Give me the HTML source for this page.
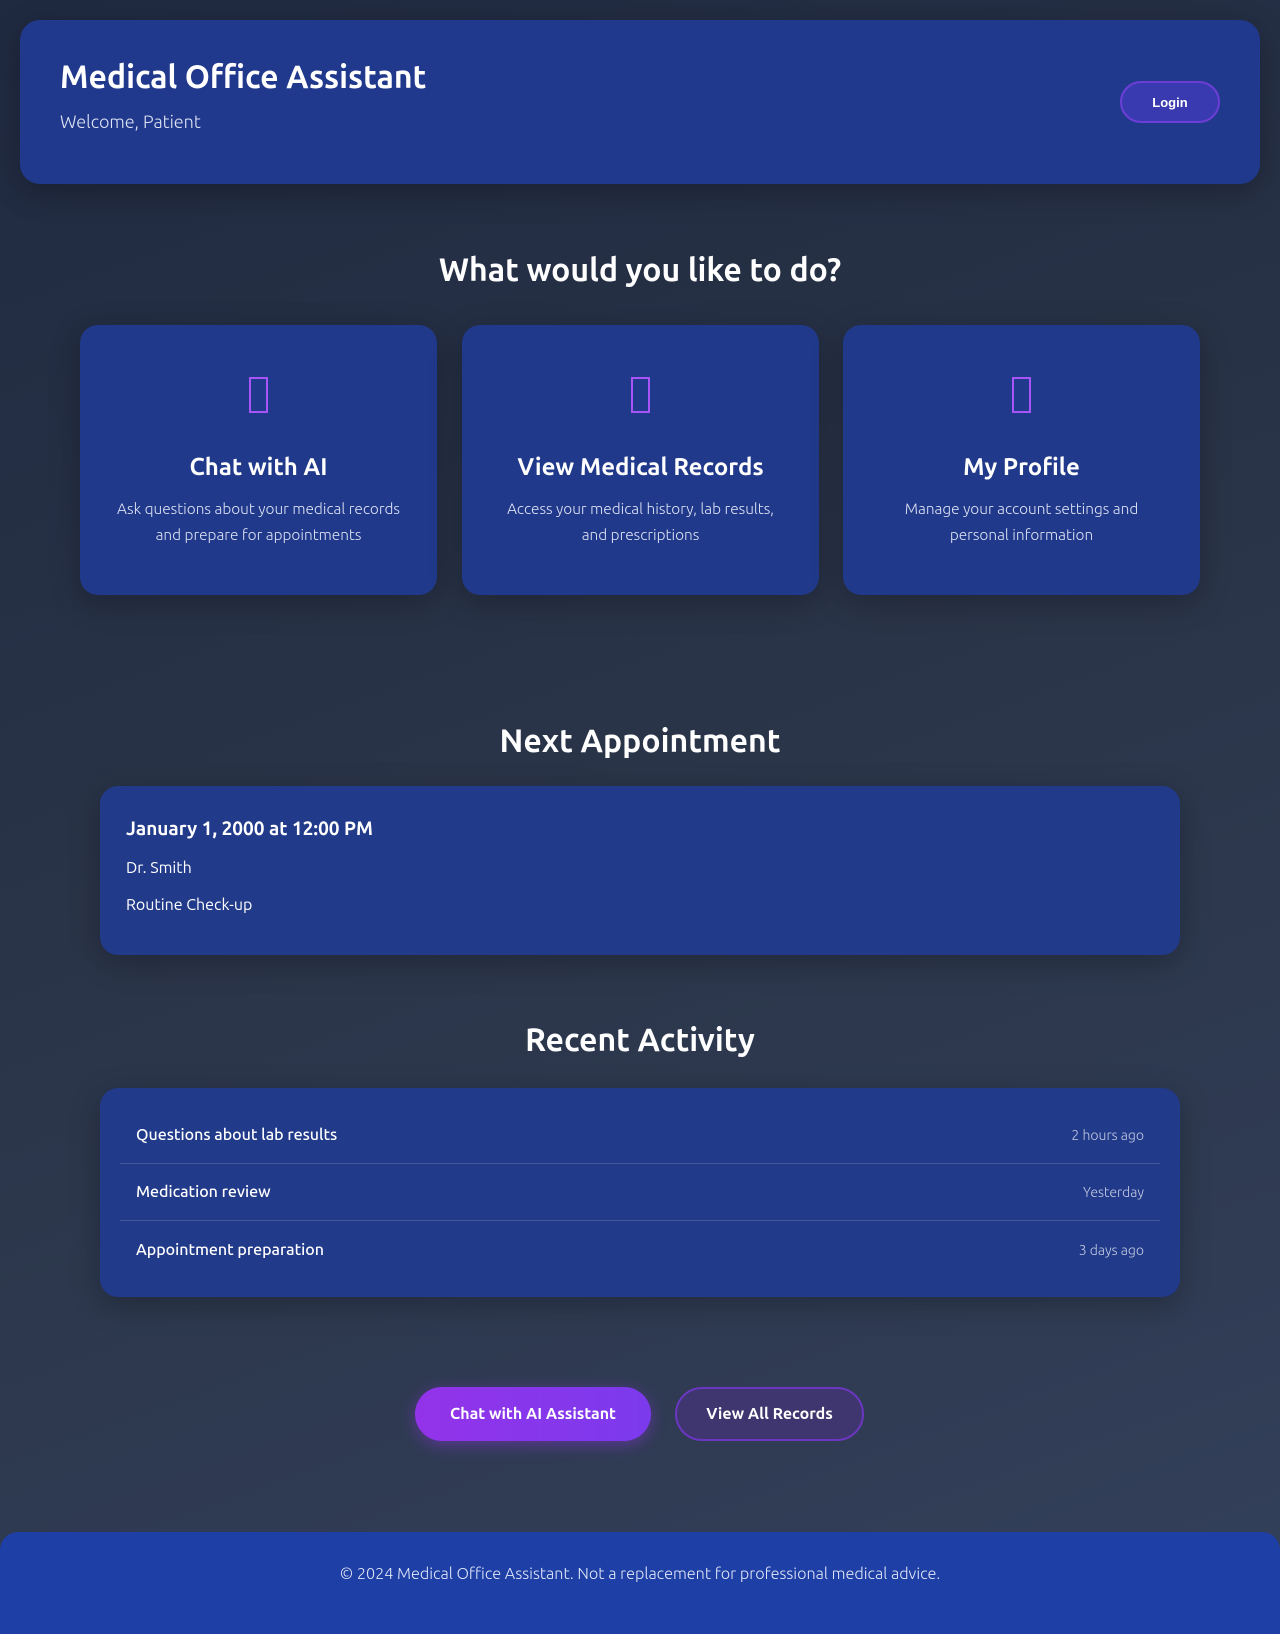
<!DOCTYPE html>
<html><head><meta charset="utf-8"><style>
*{box-sizing:border-box;margin:0;padding:0}
body{width:1280px;height:1634px;overflow:hidden;font-family:"Ubuntu","Liberation Sans",sans-serif;color:#fff;background:linear-gradient(160deg,#1f2940 0%,#2a3448 45%,#33405a 100%);position:relative}
.a{position:absolute}
.hdr{left:20px;top:20px;width:1240px;height:164px;border-radius:20px;background:#20398c;box-shadow:0 8px 30px rgba(0,0,0,.25)}
h1{font-size:32px;font-weight:600;position:absolute;left:40px;top:39px}
.wel{position:absolute;left:40px;top:92px;font-size:18px;color:#dfe4f5;font-weight:300}
.login{left:1120px;top:81px;width:100px;height:42px;border-radius:21px;background:#3a3ab0;border:2px solid #6d3ed6;font:bold 13px "Liberation Sans",sans-serif;display:flex;align-items:center;justify-content:center}
.h2{width:1280px;left:0;text-align:center;font-size:32px;font-weight:600}
.card{top:325px;width:357px;height:270px;border-radius:18px;background:#21398a;box-shadow:0 8px 30px rgba(0,0,0,.25);text-align:center}
.ico{width:19px;height:36px;border:2px solid #a855f7;margin:52px auto 0}
.card h3{font-size:24px;font-weight:600;margin-top:40px}
.card p{font-size:15.4px;line-height:26px;color:#dde3f5;margin-top:16px;padding:0 34px;font-weight:300}
.box{left:100px;width:1080px;border-radius:18px;background:#223a8a;box-shadow:0 8px 30px rgba(0,0,0,.25)}
.row{position:absolute;left:20px;width:1040px;height:57px;display:flex;justify-content:space-between;align-items:center;padding:0 16px;font-size:16px;font-weight:500}
.row span:last-child{font-size:14px;color:#c5cce4;font-weight:300}
.btn{top:1387px;height:54px;border-radius:27px;display:flex;align-items:center;justify-content:center;font-size:16px;font-weight:600}
</style></head><body>
<div class="a hdr"><h1>Medical Office Assistant</h1><div class="wel">Welcome, Patient</div></div>
<div class="a login">Login</div>
<div class="a h2" style="top:252px">What would you like to do?</div>
<div class="a card" style="left:80px"><div class="ico"></div><h3>Chat with AI</h3><p>Ask questions about your medical records and prepare for appointments</p></div>
<div class="a card" style="left:462px"><div class="ico"></div><h3>View Medical Records</h3><p>Access your medical history, lab results, and prescriptions</p></div>
<div class="a card" style="left:843px"><div class="ico"></div><h3>My Profile</h3><p>Manage your account settings and personal information</p></div>
<div class="a h2" style="top:723px">Next Appointment</div>
<div class="a box" style="top:786px;height:169px">
<div class="a" style="left:26px;top:31px;font-size:19px;font-weight:bold">January 1, 2000 at 12:00 PM</div>
<div class="a" style="left:26px;top:73px;font-size:16px;font-weight:400">Dr. Smith</div>
<div class="a" style="left:26px;top:110px;font-size:16px;font-weight:400">Routine Check-up</div>
</div>
<div class="a h2" style="top:1022px">Recent Activity</div>
<div class="a box" style="top:1088px;height:209px">
<div class="row" style="top:19px;border-bottom:1px solid rgba(255,255,255,.15)"><span>Questions about lab results</span><span>2 hours ago</span></div>
<div class="row" style="top:76px;border-bottom:1px solid rgba(255,255,255,.15)"><span>Medication review</span><span>Yesterday</span></div>
<div class="row" style="top:133px"><span>Appointment preparation</span><span>3 days ago</span></div>
</div>
<div class="a btn" style="left:415px;width:236px;background:linear-gradient(90deg,#9333ea,#7c3aed);box-shadow:0 4px 16px rgba(147,51,234,.45)">Chat with AI Assistant</div>
<div class="a btn" style="left:675px;width:189px;background:#3f3670;border:2px solid #6b36c0">View All Records</div>
<div class="a" style="left:0;top:1532px;width:1280px;height:102px;background:#1e3fa6;border-radius:18px 18px 0 0;text-align:center;padding-top:33px;font-size:16.2px;color:#e3e8f8;font-weight:300">© 2024 Medical Office Assistant. Not a replacement for professional medical advice.</div>
</body></html>
